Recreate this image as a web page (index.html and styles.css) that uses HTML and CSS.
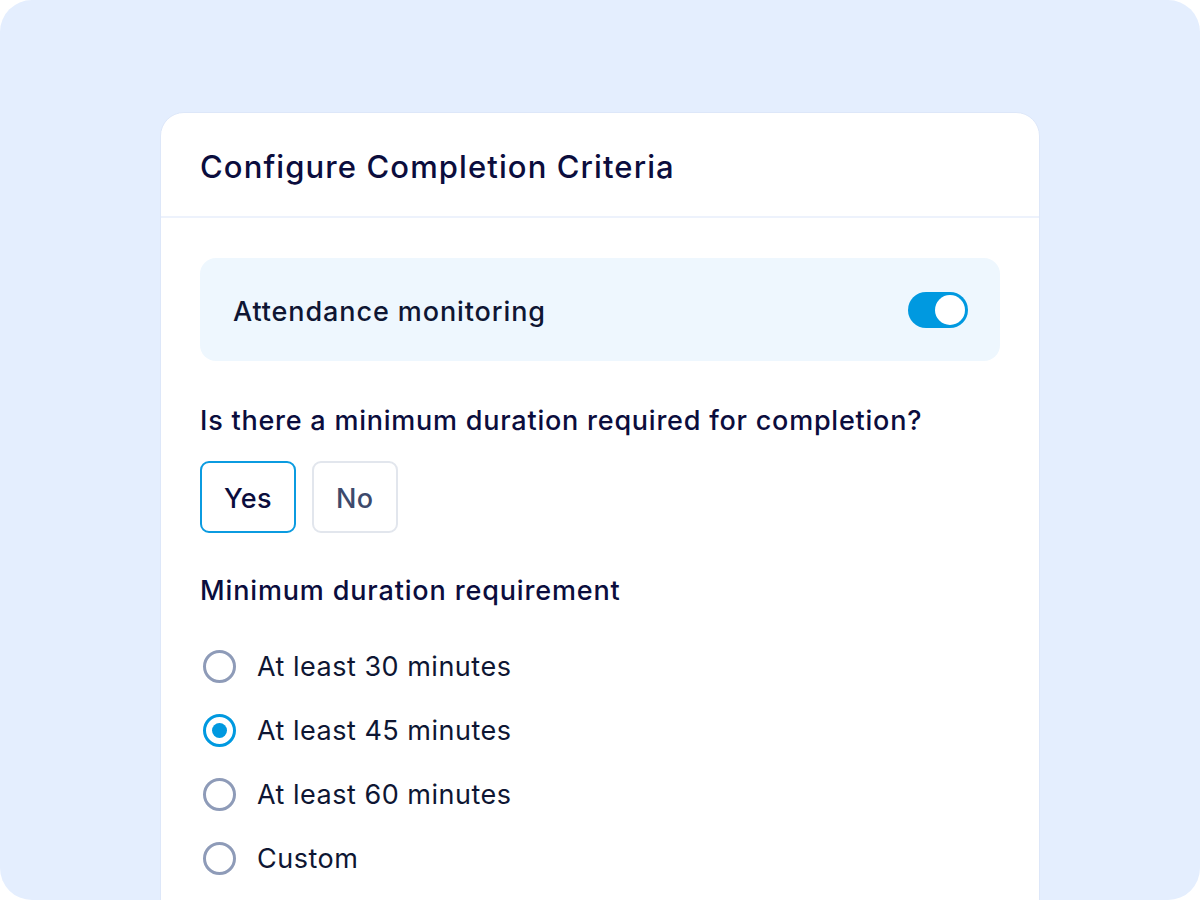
FILE: index.html
```html
<!DOCTYPE html>
<html>
<head>
<meta charset="utf-8">
<link rel="stylesheet" href="styles.css">
</head>
<body>
<div class="stage">
  <div class="card">
    <div class="card-header">
      <h1 class="title">Configure Completion Criteria</h1>
    </div>
    <div class="card-body">
      <div class="toggle-panel">
        <span class="toggle-label">Attendance monitoring</span>
        <span class="switch"><span class="knob"></span></span>
      </div>
      <div class="question">Is there a minimum duration required for completion?</div>
      <div class="choices">
        <button class="choice selected">Yes</button>
        <button class="choice">No</button>
      </div>
      <div class="section-label">Minimum duration requirement</div>
      <div class="radios">
        <div class="radio-row"><span class="radio"></span><span class="radio-text">At least 30 minutes</span></div>
        <div class="radio-row"><span class="radio checked"></span><span class="radio-text">At least 45 minutes</span></div>
        <div class="radio-row"><span class="radio"></span><span class="radio-text">At least 60 minutes</span></div>
        <div class="radio-row"><span class="radio"></span><span class="radio-text">Custom</span></div>
      </div>
    </div>
  </div>
</div>
</body>
</html>
```

FILE: styles.css
```css
html, body {
  margin: 0;
  padding: 0;
  background: #ffffff;
}
body {
  font-family: "Inter", "Liberation Sans", sans-serif;
  color: #0c1035;
}
.stage {
  width: 1200px;
  height: 900px;
  background: #e4eefe;
  border-radius: 32px;
  overflow: hidden;
  box-sizing: border-box;
  padding-top: 112px;
  display: flex;
  justify-content: center;
}
.card {
  width: 880px;
  height: 900px;
  background: #ffffff;
  border: 1px solid #dde7f9;
  border-radius: 24px;
  box-sizing: border-box;
  flex: none;
}
.card-header {
  height: 105px;
  border-bottom: 2px solid #edf2fc;
  box-sizing: border-box;
  padding: 4px 39px 0;
  display: flex;
  align-items: center;
}
.title {
  margin: 0;
  font-size: 31px;
  font-weight: 500;
  color: #0b0d3d;
  letter-spacing: 1.1px;
}
.card-body {
  padding: 40px 39px 0;
}
.toggle-panel {
  height: 103px;
  background: #eef7fe;
  border-radius: 16px;
  display: flex;
  align-items: center;
  justify-content: space-between;
  padding: 2px 32px 0 33px;
  box-sizing: border-box;
}
.toggle-label {
  font-size: 27px;
  font-weight: 500;
  color: #0e1633;
  letter-spacing: 0.9px;
  margin-top: 2px;
}
.switch {
  width: 60px;
  height: 36px;
  border-radius: 18px;
  background: #0099e0;
  display: flex;
  align-items: center;
  justify-content: flex-end;
  padding: 0 3px;
  box-sizing: border-box;
  margin-top: -2px;
}
.knob {
  width: 30px;
  height: 30px;
  border-radius: 50%;
  background: #ffffff;
}
.question {
  margin-top: 43px;
  font-size: 27px;
  font-weight: 500;
  color: #0b0d3d;
  line-height: 34px;
  letter-spacing: 0.77px;
}
.choices {
  margin-top: 23px;
  display: flex;
  gap: 16px;
}
.choice {
  height: 72px;
  padding: 2px 22px 0;
  border: 2px solid #e2e6ed;
  border-radius: 9px;
  background: #ffffff;
  font-family: inherit;
  font-size: 27px;
  font-weight: 500;
  color: #3d4a6c;
  letter-spacing: 0.4px;
}
.choice.selected {
  border-color: #0b9be0;
  color: #0b0d3d;
}
.section-label {
  margin-top: 41px;
  font-size: 27px;
  font-weight: 500;
  color: #0b0d3d;
  line-height: 34px;
  letter-spacing: 0.85px;
}
.radios {
  margin-top: 41px;
  display: flex;
  flex-direction: column;
  gap: 30px;
}
.radio-row {
  display: flex;
  align-items: center;
  gap: 21px;
  height: 34px;
  padding-left: 3px;
}
.radio {
  width: 33px;
  height: 33px;
  border: 3px solid #8e9bb8;
  border-radius: 50%;
  box-sizing: border-box;
  display: flex;
  align-items: center;
  justify-content: center;
  flex: none;
}
.radio.checked {
  border-color: #0099e0;
}
.radio.checked::after {
  content: "";
  width: 15px;
  height: 15px;
  border-radius: 50%;
  background: #0099e0;
}
.radio-text {
  font-size: 27px;
  font-weight: 400;
  color: #0e1633;
  letter-spacing: 0.5px;
}
```
